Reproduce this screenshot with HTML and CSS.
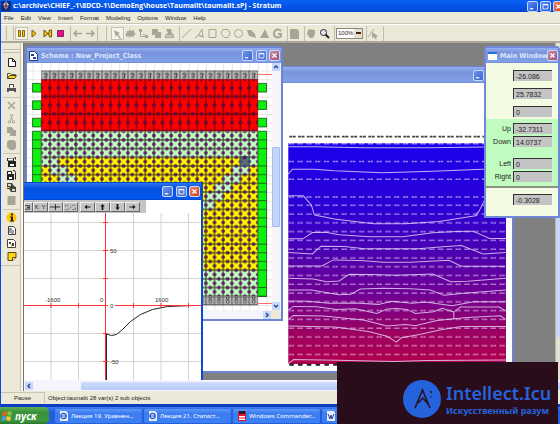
FILE: index.html
```html
<!DOCTYPE html>
<html lang="en">
<head>
<meta charset="utf-8">
<title>Stratum</title>
<link rel="stylesheet" href="styles.css">
</head>
<body>
<svg class="defs" aria-hidden="true">
  <defs>
    <symbol id="min" viewBox="0 0 11 11"><path d="M2.500 7.500h4v1.500h-4z" fill="#fff"/></symbol>
    <symbol id="max" viewBox="0 0 11 11"><path d="M2.500 3h6v5.500h-6z M2.500 3.500h6" fill="none" stroke="#fff"/></symbol>
    <symbol id="close" viewBox="0 0 11 11"><path d="M3 3l5 5M8 3l-5 5" fill="none" stroke="#fff" stroke-width="1.500"/></symbol>
    <symbol id="ie" viewBox="0 0 10 10"><path d="M1 0h6l2 2v8H1z" fill="#e8eefc"/><circle cx="4.500" cy="5" r="2.600" fill="none" stroke="#2458c0" stroke-width="1.300"/><path d="M2 5h5" stroke="#2458c0"/></symbol>
  </defs>
</svg>

<div class="app">
  <header class="titlebar">
    <svg class="app-icon" viewBox="0 0 10 10"><path d="M0 0h10v10H0z" fill="#0b2d80"/><path d="M5 0l3 4-3 5-3-5z" fill="#d9d0d0"/><path d="M1 5h8M5 1v8" stroke="#401828"/></svg>
    <h1>c:\archive\CHIEF_-1\8DCD-1\DemoEng\house\Taumalit\taumalit.sPJ - Stratum</h1>
    <button class="cap" aria-label="Minimize"><svg><use href="#min"/></svg></button>
    <button class="cap" aria-label="Maximize"><svg><use href="#max"/></svg></button>
    <button class="cap close" aria-label="Close"><svg><use href="#close"/></svg></button>
  </header>

  <nav class="menubar">
    <button>File</button><button>Edit</button><button>View</button><button>Insert</button><button>Format</button><button>Modeling</button><button>Options</button><button>Window</button><button>Help</button>
  </nav>

  <div class="toolbar">
    <span class="grip"></span>
    <button class="tool on" aria-label="Pause"><svg viewBox="0 0 13 13"><path d="M3.500 3.500h2v6h-2zM7.500 3.500h2v6h-2z" fill="#ffc400" stroke="#85640a"/></svg></button>
    <button class="tool" aria-label="Run"><svg viewBox="0 0 13 13"><path d="M4 3v7l4-3.500z" fill="#ffc400" stroke="#77590a"/></svg></button>
    <button class="tool" aria-label="Step"><svg viewBox="0 0 13 13"><path d="M3 3v7l4-3.500zM8.500 3h2v7h-2l-1-3z" fill="#ffc400" stroke="#665014"/></svg></button>
    <button class="tool" aria-label="Stop"><svg viewBox="0 0 13 13"><path d="M3.500 3.500h6v6h-6z" fill="#f0098b" stroke="#7a2858"/></svg></button>
    <span class="sep"></span>
    <button class="tool" aria-label="Back"><svg viewBox="0 0 13 13"><path d="M11 6.500H3M6 3.500l-3 3 3 3" fill="none" stroke="#a9a698" stroke-width="1.500"/></svg></button>
    <button class="tool" aria-label="Forward"><svg viewBox="0 0 13 13"><path d="M2 6.500h8M7 3.500l3 3-3 3" fill="none" stroke="#a9a698" stroke-width="1.500"/></svg></button>
    <span class="sep wide"></span>
    <button class="tool on" aria-label="Select"><svg viewBox="0 0 13 13"><path d="M3 3l6 3-2 1 3 4-1 1-3-4-1.500 1.500z" fill="#a9a698"/></svg></button>
    <button class="tool" aria-label="Parts"><svg viewBox="0 0 13 13"><path d="M3 4l2 0 1-2 1 2 3-1v2l2 2-2 1v2l-3-1-1 2-2-2-2 1V8L1 7l2-1z" fill="#a9a698"/></svg></button>
    <button class="tool" aria-label="Links"><svg viewBox="0 0 13 13"><path d="M2 2h3v3H2zM6 7h2v1H6zM8 8h3v3H8z" fill="#a9a698"/><path d="M3.500 5v4.500H8" fill="none" stroke="#a9a698"/></svg></button>
    <button class="tool" aria-label="Copy"><svg viewBox="0 0 13 13"><path d="M2 2h6v3h3v6H5V8H2z" fill="#a9a698"/></svg></button>
    <button class="tool" aria-label="Order"><svg viewBox="0 0 13 13"><path d="M3 2h5l1 4 2 2v3H2V8l3-2z" fill="#a9a698"/><path d="M3 9h7" stroke="#ece9d8"/></svg></button>
    <span class="sep"></span>
    <button class="tool" aria-label="Line"><svg viewBox="0 0 13 13"><path d="M2 11l9-9" stroke="#a9a698"/></svg></button>
    <button class="tool" aria-label="Text"><svg viewBox="0 0 13 13"><path d="M2 11l3-2 4-7 1 8-5-2 6 2" fill="none" stroke="#a9a698"/></svg></button>
    <button class="tool" aria-label="Rectangle"><svg viewBox="0 0 13 13"><path d="M3 2.500h7v8H3z" fill="none" stroke="#a9a698"/></svg></button>
    <button class="tool" aria-label="Polygon"><svg viewBox="0 0 13 13"><path d="M4 2.500h5l2 4-2 4H5l-3-4z" fill="none" stroke="#a9a698"/></svg></button>
    <button class="tool" aria-label="Ellipse"><svg viewBox="0 0 13 13"><circle cx="6.500" cy="6.500" r="4" fill="none" stroke="#a9a698"/></svg></button>
    <button class="tool" aria-label="Fill"><svg viewBox="0 0 13 13"><path d="M2 3l4 0 4 4 1 4-3-1-4-1-1-3z" fill="#a9a698"/></svg></button>
    <button class="tool" aria-label="Flip"><svg viewBox="0 0 13 13"><path d="M7 2l4 9H2z" fill="#a9a698"/></svg></button>
    <button class="tool" aria-label="Rotate"><svg viewBox="0 0 13 13"><path d="M10 4a4 4 0 1 0 0 5V7H7" fill="none" stroke="#a9a698" stroke-width="2"/></svg></button>
    <span class="sep"></span>
    <button class="tool" aria-label="Page"><svg viewBox="0 0 13 13"><path d="M2 2h7l2 2v8H2z" fill="#a9a698"/></svg></button>
    <span class="sep"></span>
    <button class="tool" aria-label="Pan"><svg viewBox="0 0 13 13"><path d="M3 3l2-1 1 1 1-1 1 1 2 0v4l-2 4H5L2 7z" fill="#a9a698"/></svg></button>
    <button class="tool" aria-label="Zoom"><svg viewBox="0 0 13 13"><path d="M7 7l4 4" stroke="#222" stroke-width="2"/><circle cx="5.500" cy="5.500" r="3" fill="#e5eaef" stroke="#222"/></svg></button>
    <span class="sep"></span>
    <span class="combo"><select aria-label="Zoom level"><option>100%</option></select></span>
    <span class="sep"></span>
    <button class="tool" aria-label="Edit nodes"><svg viewBox="0 0 13 13"><path d="M1 10l6-8" stroke="#a9a698"/><path d="M5 5l6 4-2 1 1 2-2 0-1-2-2 1z" fill="#a9a698"/></svg></button>
    <span class="sep"></span>
  </div>

  <main class="client">
    <aside class="sidebar">
      <span class="hgrip"></span>
      <button class="tool" aria-label="New"><svg viewBox="0 0 13 13"><path d="M3.500 2.500h4l3 3v5h-7zM7.500 2.500v3h3" fill="#fff" stroke="#222"/></svg></button>
      <button class="tool" aria-label="Open"><svg viewBox="0 0 13 13"><path d="M2.500 9.500v-5h3l1 1h4v2" fill="#fff59a" stroke="#555"/><path d="M2.500 9.500l2-3h7l-2 3z" fill="#f8d820" stroke="#4a4410"/></svg></button>
      <button class="tool" aria-label="Print"><svg viewBox="0 0 13 13"><path d="M4.500 5.500v-3h4v3" fill="#fff" stroke="#444"/><path d="M2 6h9v4H2z" fill="#555"/><path d="M4 9.500h5" stroke="#fff"/></svg></button>
      <span class="hsep"></span>
      <button class="tool" aria-label="Delete"><svg viewBox="0 0 13 13"><path d="M3 3l7 7M10 3l-7 7" stroke="#a9a698" stroke-width="1.500"/></svg></button>
      <button class="tool" aria-label="Cut"><svg viewBox="0 0 13 13"><path d="M5 2l3 7M8 2L5 9" stroke="#a9a698"/><circle cx="4.500" cy="10" r="1.200" fill="none" stroke="#a9a698"/><circle cx="8.500" cy="10" r="1.200" fill="none" stroke="#a9a698"/></svg></button>
      <button class="tool" aria-label="Copy"><svg viewBox="0 0 13 13"><path d="M2 2h5l2 3h2v6H5V8H2z" fill="#a9a698"/></svg></button>
      <button class="tool" aria-label="Paste"><svg viewBox="0 0 13 13"><path d="M4 2h5l2 2v6l-2 2H5L2 9V4z" fill="#a9a698"/></svg></button>
      <span class="hsep"></span>
      <button class="tool" aria-label="Save scheme"><svg viewBox="0 0 13 13"><path d="M2 3h7v3h2v6H3V6H2z" fill="#222"/><path d="M3 3.500h5v2H3zM5 9h4v2H5z" fill="#fff"/><path d="M9.500 2.500h1v2" fill="none" stroke="#222"/></svg></button>
      <button class="tool" aria-label="Save image"><svg viewBox="0 0 13 13"><path d="M2 3h5v3h2v6H2z" fill="#222"/><path d="M3 4h3v2H3zM4 9h3v2H4z" fill="#fff"/><path d="M8 2.500h1.500l1 2v7" fill="none" stroke="#222"/></svg></button>
      <button class="tool" aria-label="Import"><svg viewBox="0 0 13 13"><path d="M2 2h5l2 3 2 1v5H6L4 8H2z" fill="#444"/><path d="M3 3h3v2H3zM7 8h3v2H7z" fill="#d8d6c8"/><path d="M2 6.500h3" stroke="#d8c020"/></svg></button>
      <button class="tool" aria-label="Module"><svg viewBox="0 0 13 13"><path d="M2.500 2h8v9h-8z" fill="#a9a698"/></svg></button>
      <span class="hsep"></span>
      <button class="tool" aria-label="Information"><svg viewBox="0 0 13 13"><circle cx="6.500" cy="6.500" r="5" fill="#ffc800"/><path d="M6 2.500h2v2H6zM5 5.500h3v4h1v1H5v-1h1v-3H5z" fill="#222"/></svg></button>
      <button class="tool" aria-label="Tree"><svg viewBox="0 0 13 13"><path d="M3.500 2.500h5l2 2v6h-7z" fill="#fff" stroke="#444"/><path d="M5 5h2M6 7h3M6 9h3M5 4v5" stroke="#444"/></svg></button>
      <button class="tool" aria-label="Library"><svg viewBox="0 0 13 13"><path d="M2.500 2.500h6l2 2v6h-8z" fill="#fff" stroke="#444"/><path d="M4 5h2v2H4zM7 6h2v3H7z" fill="#444"/><path d="M6 7h1v3H6z" fill="#d8c020"/></svg></button>
      <button class="tool" aria-label="Note"><svg viewBox="0 0 13 13"><path d="M3 2.500h8v5l-3 3H3z" fill="#ffd21c" stroke="#5c4a08"/><path d="M7.500 10.500v-3h3.500" fill="#fff7c0" stroke="#5c4a08"/></svg></button>
      <span class="hsep last"></span>
    </aside>

    <div class="workspace">
      <section class="window contour" aria-label="Temperature field">
        <div class="caption"><h2></h2><button class="cap" aria-label="Minimize"><svg><use href="#min"/></svg></button><span class="spill"></span></div>
        <svg class="canvas" viewBox="203 82 308 289" preserveAspectRatio="xMinYMin slice">
          <defs>
            <linearGradient id="heat" x1="0" y1="0" x2="0" y2="1">
              <stop offset="0" stop-color="#1c00ec"/><stop offset=".3" stop-color="#2c00d4"/><stop offset=".5" stop-color="#4c00b0"/><stop offset=".7" stop-color="#740090"/><stop offset=".86" stop-color="#9c0060"/><stop offset="1" stop-color="#b2004c"/>
            </linearGradient>
            <pattern id="vals" patternUnits="userSpaceOnUse" x="288" y="199.800" width="8.750" height="8.750">
              <path d="M.5 4.200h2.300M3.300 4.200h2.400" stroke="#eeddff" stroke-width="1.500" opacity=".62"/>
            </pattern>
          </defs>
          <path d="M203 82h308v289H203z" fill="#fff"/>
          <path d="M288 142h217v220H288z" fill="url(#heat)"/>
          <path d="M289 135.500h216" stroke="#444" stroke-width="1.600" stroke-dasharray="2.800 .6 3 2.350"/>
          <path d="M289 362.800h50" stroke="#222" stroke-width="2" stroke-dasharray="4.500 4.250"/>
          <path d="M288.500 142.500H505M288.500 160.300H505M288.500 178H505M288.500 195.600H505" stroke="#eeddff" stroke-width="1.500" stroke-dasharray="2.300 .5 2.400 3.550" opacity=".62"/>
          <path d="M288 199.800h217v157.500H288z" fill="url(#vals)"/>
          <g fill="none" stroke="#ddd0f4" stroke-width="1" opacity=".85">
            <path d="M288 145.500h28l47 1h65l77-1M288 173l4-5h22l20 1.500 48 2 50-1.500 50-2h19l4 4M288 194.500h15l8 9 3 10M486 194l-3 6-5 10-3 3"/>
            <g transform="translate(280 200) scale(.3333)" stroke-width="3">
              <path d="M102 41l60 12 117 14 96 0 100-7 114-18"/>
              <path d="M24 112h44l28-19 40-1 40 8 90 6h100l90-12 70-4 50-1 50 22h50"/>
              <path d="M24 153l72 4 26-23 70 1 60 7h160l75-6 55-4 65 25 68-4"/>
              <path d="M24 193h100l35-18 80 2 70 5h80l115-6 38 18h130"/>
              <path d="M24 230l75 2 40 8 37-2 30-20 70 1 70 2 110-4 54 23 50-1 115-9"/>
              <path d="M24 265h70l80 14 37-1 28-16 70-2 80 1 60 4 40 16 60-6 126-10"/>
              <path d="M24 298l60 1 60 6 80-1 70 4 40-9 60 6 40-4 80 11 65-12h96"/>
              <path d="M24 325l15-11 70 1 60 8 55-2 65 14 30-13 30-2 30 3 25 12 55-5 25-10 35 11 20-15h116l20 12"/>
              <path d="M24 353l15-12 90 2 120 12 70 18 55-5 30 4 65-16 90-9 100-5 15 11M519 330v24"/>
              <path d="M24 373l140 3 100 13 55 14 28 18 15-13 54-10 65-14 60-10h134"/>
              <path d="M24 485l16-12 130 2 170 4 100-3 235-2"/>
            </g>
          </g>
        </svg>
      </section>

      <section class="window scheme" aria-label="Scheme : New_Project_Class">
        <div class="caption">
          <svg class="doc-icon" viewBox="0 0 9 10"><path d="M.5.500h5l3 3v6h-8z" fill="#fff" stroke="#223c90"/><path d="M2 3h3v2H2zM4 6h3v2H4z" fill="#223c90"/></svg>
          <h2>Scheme : New_Project_Class</h2>
          <button class="cap" aria-label="Minimize"><svg><use href="#min"/></svg></button>
          <button class="cap" aria-label="Maximize"><svg><use href="#max"/></svg></button>
          <button class="cap close" aria-label="Close"><svg><use href="#close"/></svg></button>
        </div>
        <div class="pane">
          <svg class="canvas" viewBox="26 62 246 249" preserveAspectRatio="xMinYMin slice">
            <defs>
              <pattern id="paper" patternUnits="userSpaceOnUse" x="31.600" y="60.800" width="8.700" height="8.720"><path d="M0 .500h8.700M.5 0v8.720" stroke="#e6e6e6" fill="none"/></pattern>
              <pattern id="mesh" patternUnits="userSpaceOnUse" x="40.300" y="130.500" width="8.700" height="8.720">
                <path d="M0 0h8.700M0 0v8.720M8.700 0v8.720M0 8.720h8.700" fill="none" stroke="#182010" stroke-width=".9"/>
                <g fill="#86108a" stroke="#280828" stroke-width=".7"><circle cx="0" cy="4.360" r="1.500"/><circle cx="8.700" cy="4.360" r="1.500"/><circle cx="4.350" cy="0" r="1.500"/><circle cx="4.350" cy="8.720" r="1.500"/></g>
              </pattern>
              <pattern id="brick" patternUnits="userSpaceOnUse" x="40.300" y="78.200" width="8.700" height="17.440">
                <path d="M0 0h8.700M0 0v17.440M8.700 0v17.440M0 17.440h8.700" fill="none" stroke="#500000" stroke-width=".9"/>
                <g fill="#70106c" stroke="#280818" stroke-width=".7"><circle cx="0" cy="8.720" r="1.500"/><circle cx="8.700" cy="8.720" r="1.500"/><circle cx="4.350" cy="0" r="1.500"/><circle cx="4.350" cy="17.440" r="1.500"/></g>
              </pattern>
              <pattern id="port" patternUnits="userSpaceOnUse" x="40.300" y="69.500" width="8.700" height="8.700">
                <path d="M0 .300h8.700M0 0v8.700M8.700 0v8.700" stroke="#333" stroke-width=".8"/>
                <path d="M3.200 4.500V3h2.600v2L4.400 6" fill="none" stroke="#222" stroke-width=".9"/><circle cx="4.500" cy="7" r="1.100" fill="#ccc" stroke="#222" stroke-width=".8"/>
              </pattern>
              <pattern id="foot" patternUnits="userSpaceOnUse" x="40.300" y="296.200" width="8.700" height="9">
                <path d="M0 .400h8.700M0 0v9M8.700 0v9M0 8.700h8.700" stroke="#333" stroke-width=".8"/>
                <circle cx="4.500" cy="2" r="1.300" fill="#ccc" stroke="#222" stroke-width=".8"/><circle cx="4.500" cy="5.400" r="1.500" fill="#ddd" stroke="#222" stroke-width=".9"/>
              </pattern>
            </defs>
            <path d="M26 62h246v249H26z" fill="#fff"/><path d="M26 62h246v249H26z" fill="url(#paper)"/>
            <path d="M257 73.500h15M257 303.500h15" stroke="#f66"/>
            <g fill="#0df010" stroke="#145014" stroke-width=".8">
              <path d="M31.600 82.500h8.700v8.700h-8.700zM31.600 100h8.700v8.700h-8.700zM31.600 117.500h8.700v8.700h-8.700zM31.600 130.500h8.700v166h-8.700zM257.800 82.500h8.700v8.700h-8.700zM257.800 100h8.700v8.700h-8.700zM257.800 117.500h8.700v8.700h-8.700zM257.800 130.500h8.700v166h-8.700z"/>
              <path d="M31.600 139.200h8.700m-8.700 8.700h8.700m-8.700 17.500h8.700m-8.700 8.700h8.700M257.800 139.200h8.700m-8.700 8.700h8.700m-8.700 17.500h8.700m-8.700 8.700h8.700m-8.700 8.700h8.700m-8.700 8.700h8.700m-8.700 8.700h8.700m-8.700 8.700h8.700m-8.700 8.700h8.700m-8.700 8.700h8.700m-8.700 17.500h8.700m-8.700 8.700h8.700m-8.700 8.700h8.700m-8.700 8.700h8.700m-8.700 17.500h8.700m-8.700 8.700h8.700"/>
            </g>
            <path d="M40.300 69.500h217.500v8.700H40.300zM40.300 296.200h217.500v9H40.300z" fill="#b8b8b8"/>
            <path d="M40.300 69.500h217.500v8.700H40.300z" fill="url(#port)"/>
            <path d="M40.300 296.200h217.500v9H40.300z" fill="url(#foot)"/>
            <path d="M40.300 78.200h217.500v52.300H40.300z" fill="#fb0000"/>
            <path d="M40.300 78.200h217.500v52.300H40.300z" fill="url(#brick)"/>
            <path d="M40.300 130.500h217.500v165.700H40.300z" fill="#c2fac2"/>
            <path d="M40.300 156.700h217.500v113.400H40.300z" fill="#fff400"/>
            <path d="M40.300 156.700h17.400v8.700h8.700v8.700h8.700v8.700h8.700v8.700H66.400v-8.700h-8.700v-8.700H49v-8.700h-8.700z" fill="#c2fac2"/>
            <path d="M257.800 156.700v8.700h-8.700v8.700h-8.700v8.700h-8.700v8.700H223v8.700h-8.700v8.700h-17.400v-8.700h8.700v-8.700h8.700v-8.700h8.700v-8.700h8.700v-8.700h17.400v-8.700z" fill="#c2fac2"/>
            <path d="M40.300 130.500h217.500v165.700H40.300z" fill="url(#mesh)"/>
            <path d="M239.500 155.500h10v10.500h-10z" fill="#3a5288" opacity=".82"/><circle cx="244.500" cy="157" r="1.500" fill="#601870" stroke="#222" stroke-width=".7"/>
          </svg>
          <div class="vscroll">
            <svg viewBox="0 0 8 8"><path d="M2 5l2-2 2 2" fill="none" stroke="#2c4a88" stroke-width="1.500"/></svg>
            <span class="track a"></span><span class="thumb"></span><span class="track b"></span>
            <svg viewBox="0 0 8 8"><path d="M2 3l2 2 2-2" fill="none" stroke="#2c4a88" stroke-width="1.500"/></svg>
          </div>
        </div>
        <div class="hscroll mini"><span class="track"></span><svg viewBox="0 0 8 8"><path d="M3 2l2 2-2 2" fill="none" stroke="#2c4a88" stroke-width="1.500"/></svg><span class="corner"></span></div>
      </section>

      <section class="window graph active" aria-label="Graph">
        <div class="caption">
          <h2></h2>
          <button class="cap" aria-label="Minimize"><svg><use href="#min"/></svg></button>
          <button class="cap" aria-label="Maximize"><svg><use href="#max"/></svg></button>
          <button class="cap close" aria-label="Close"><svg><use href="#close"/></svg></button>
        </div>
        <div class="plot-tools">
          <button class="cut" aria-label="Scale"><svg viewBox="0 0 15 9"><path d="M7 3h5v4H7M9 5h3" fill="none" stroke="#222"/></svg></button>
          <button class="xy">X: Y:</button>
          <button aria-label="Axes"><svg viewBox="0 0 15 9"><path d="M1 4.500h12M7.500 1v7" stroke="#222"/></svg></button>
          <button aria-label="Fit"><svg viewBox="0 0 15 9"><path d="M2 7.500h3l5-5h3M10 7.500h3V5M2 4V2.500h3" fill="none" stroke="#555" stroke-dasharray="2 1"/></svg></button>
          <i></i>
          <button aria-label="Left"><svg viewBox="0 0 15 9"><path d="M4 4.500l3-2.500v2h4v1H7v2z" fill="#111"/></svg></button>
          <button aria-label="Up"><svg viewBox="0 0 15 9"><path d="M7.500 1l2.500 3H8.500v4h-2V4H5z" fill="#111"/></svg></button>
          <button aria-label="Down"><svg viewBox="0 0 15 9"><path d="M7.500 8l2.500-3H8.500V1h-2v4H5z" fill="#111"/></svg></button>
          <button aria-label="Right"><svg viewBox="0 0 15 9"><path d="M11 4.500L8 2v2H4v1h4v2z" fill="#111"/></svg></button>
        </div>
        <svg class="canvas" viewBox="24 212 177 168" preserveAspectRatio="xMinYMin slice">
          <path d="M24 212h177v168H24z" fill="#fff"/>
          <path d="M51 212v168M78.500 212v168M133.500 212v168M161 212v168M188.500 212v168M24 221.500h177M24 249.500h177M24 277.500h177M24 332.500h177M24 360.500h177" stroke="#d4d4d4"/>
          <path d="M106.500 380v-47l5 1.500 5-1 6-5 8-8 10-7 12-5 15-3 25-1" fill="none" stroke="#222"/>
          <path d="M24 304.500h84M115 304.500h86M105.500 212v168M103 221.500h5M103 249.500h5M103 277.500h5M103 332.500h5M103 360.500h5M51 302v5M78.500 302v5M133.500 302v5M161 302v5M188.500 302v5" stroke="#f33"/>
          <g class="ticks"><text x="110" y="252">50</text><text x="110" y="307">0</text><text x="110" y="363">-50</text><text x="100" y="301">0</text><text x="45" y="301">-1600</text><text x="155" y="301">1600</text></g>
        </svg>
      </section>

      <section class="window values" aria-label="Main Window">
        <div class="caption">
          <svg class="doc-icon" viewBox="0 0 9 8"><path d="M0 0h9v8H0z" fill="#fff"/><path d="M0 0h9v2H0z" fill="#2470d8"/></svg>
          <h2>Main Window</h2>
          <button class="cap close" aria-label="Close"><svg><use href="#close"/></svg></button>
        </div>
        <form class="fields">
          <div class="group top">
            <input aria-label="Value 1" value="-26.086"><input aria-label="Value 2" value="25.7832"><input aria-label="Value 3" value="0">
          </div>
          <div class="group mint">
            <div class="row"><label for="up">Up</label><input id="up" value="-32.7311"></div>
            <div class="row"><label for="down">Down</label><input id="down" value="14.0737"></div>
            <div class="row gap"><label for="left">Left</label><input id="left" value="0"></div>
            <div class="row"><label for="right">Right</label><input id="right" value="0"></div>
          </div>
          <div class="group end"><input aria-label="Value 4" value="-0.3028"></div>
        </form>
      </section>
    </div>

    <div class="app-vscroll"><span></span></div>
    <div class="hscroll main">
      <svg viewBox="0 0 8 8"><path d="M5 2L3 4l2 2" fill="none" stroke="#2c4a88" stroke-width="1.500"/></svg>
      <span class="track"></span><span class="thumb"></span>
    </div>
  </main>

  <footer class="status"><span class="state">Pause</span><span>Object:taumalit 28 var(s) 2 sub objects</span></footer>
</div>

<div class="taskbar">
  <button class="start"><svg viewBox="0 0 11 11"><path d="M1 2l4-1v4L0 6z" fill="#f05a28"/><path d="M6 1l4 1-1 4-4-1z" fill="#7cc83c"/><path d="M0 7l4-1v4l-4 1z" fill="#4a9cf8"/><path d="M5 6l4 1-1 4-4-1z" fill="#fbc822"/></svg>пуск</button>
  <button class="task"><svg><use href="#ie"/></svg>Лекция 19. Уравнен...</button>
  <button class="task"><svg><use href="#ie"/></svg>Лекция 21. Статист...</button>
  <button class="task"><svg viewBox="0 0 10 10"><path d="M1 0h8v10H1z" fill="#d8182c"/><path d="M2 0h6v3H2z" fill="#202030"/><path d="M2 5h6v4H2z" fill="#fff"/><path d="M2 7h6" stroke="#d8182c"/></svg>Windows Commander...</button>
  <button class="task" aria-label="Document"><svg viewBox="0 0 10 10"><path d="M1 0h7l1 2v8H1z" fill="#e8eefc"/><path d="M2 3l2 5 1-4 1 4 2-5" fill="none" stroke="#2040a0"/></svg></button>
</div>

<div class="brand">
  <svg viewBox="0 0 38 40"><circle cx="19" cy="20" r="19" fill="#2563dc"/><path d="M12 29l7.500-18L27 29M15 24l5-5 5 6" fill="none" stroke="#2a0d1b" stroke-width="1.500"/><circle cx="28" cy="13" r="1" fill="#2a0d1b"/><circle cx="28" cy="18" r=".7" fill="#2a0d1b"/></svg>
  <div><strong>Intellect.Icu</strong><span>Искусственный разум</span></div>
</div>
</body>
</html>
```

FILE: styles.css
```css
* { box-sizing: border-box; }

body {
  margin: 0;
  height: 100vh;
  display: flex;
  flex-direction: column;
  overflow: hidden;
  position: relative;
  font-family: "Liberation Sans", sans-serif;
  font-size: 7px;
  color: #222;
  background: #245edb;
}

.defs { position: absolute; width: 0; height: 0; }

button, input, select {
  font: inherit;
  color: inherit;
  margin: 0;
  padding: 0;
  border: 0;
  border-radius: 0;
  background: none;
}

svg { display: block; flex: none; }

h1, h2 { margin: 0; flex: 1; min-width: 0; white-space: nowrap; }

.app {
  flex: 1;
  min-height: 0;
  display: flex;
  flex-direction: column;
  border-left: 1px solid #0a4ae0;
  border-bottom: 3px solid #0c3cc0;
  background: #ece9d8;
}

/* Captions */
.titlebar {
  height: 12px;
  flex: none;
  display: flex;
  align-items: center;
  gap: 2px;
  padding-left: 1px;
  margin-left: -1px;
  overflow: hidden;
  color: #fff;
  background: linear-gradient(#0862f4, #0452e4 60%, #0348d0);
}

.titlebar h1 { font: bold 7px/12px "Open Sans", sans-serif; }
.app-icon { width: 10px; height: 10px; }
.titlebar .close { margin-right: -4px; }

.cap {
  width: 11px;
  height: 11px;
  flex: none;
  border: 1px solid #c8d8fc;
  border-radius: 2px;
  background: linear-gradient(135deg, #5c8cf4, #1c50d8);
}

.cap svg { width: 9px; height: 9px; }
.cap.close { background: linear-gradient(135deg, #f08868, #d03c18); }

.menubar {
  height: 12px;
  flex: none;
  display: flex;
  align-items: center;
  gap: 7px;
  padding-left: 3px;
  font-size: 6px;
  border-bottom: 1px solid #c8c5b4;
}

/* Tool strips */
.toolbar {
  height: 19px;
  flex: none;
  display: flex;
  align-items: center;
  padding-left: 5px;
  border-top: 1px solid #fff;
  border-bottom: 2px solid #aca899;
}

.grip { width: 8px; height: 14px; border-left: 1px solid #c0bdac; border-right: 1px solid #c0bdac; margin-right: 1px; }
.tool { width: 13px; height: 13px; flex: none; }
.tool svg { width: 13px; height: 13px; }
.tool.on { outline: 1px solid #c4c1b2; outline-offset: -1px; background: #f5f3ea; }
.sep { width: 4px; height: 15px; flex: none; border-right: 1px solid #c0bdac; }
.sep.wide { width: 10px; margin-right: 4px; border-left: 1px solid #c0bdac; }

.combo { position: relative; flex: none; width: 27px; height: 11px; margin-left: 1px; }
.combo select {
  width: 100%;
  height: 100%;
  display: block;
  appearance: none;
  padding-left: 1px;
  font-size: 6px;
  background: #fff;
  border: 1px solid #8c8a80;
}
.combo::after {
  content: "";
  position: absolute;
  right: 1px;
  top: 1px;
  width: 8px;
  height: 9px;
  background: linear-gradient(#4c2010, #4c2010) center / 5px 2px no-repeat #e4e0d0;
  pointer-events: none;
}

.client {
  flex: 1;
  min-height: 0;
  display: grid;
  grid-template-columns: 23px 1fr 5px;
  grid-template-rows: 1fr 11px;
}

.sidebar {
  grid-row: 1 / 3;
  display: flex;
  flex-direction: column;
  align-items: center;
  padding-right: 2px;
  border-right: 1px solid #77756a;
  box-shadow: inset -2px 0 #f8f6ee, inset -3px 0 #c8c5b4;
}

.hgrip { width: 17px; height: 4px; flex: none; margin: 6px 0 3px; border-top: 1px solid #c0bdac; border-bottom: 1px solid #c0bdac; }
.hsep { width: 17px; height: 3px; flex: none; border-bottom: 1px solid #c8c5b4; margin-bottom: 1px; }
.hsep.last { width: 100%; }

.workspace { position: relative; background: #808080; }

.app-vscroll { background: #e4e0d4; padding-top: 9px; padding-bottom: 43px; border-left: 1px solid #b8b6aa; }
.app-vscroll span { display: block; height: 100%; background: #c8d6fb; }

/* Document windows placed on the workspace */
.window {
  position: absolute;
  display: flex;
  flex-direction: column;
  border: 2px solid #6c84d4;
  border-radius: 4px 4px 0 0;
  background: #fff;
}

.caption {
  height: 15px;
  flex: none;
  display: flex;
  align-items: center;
  gap: 3px;
  padding: 0 1px 0 2px;
  color: #dce6fc;
  background: linear-gradient(#94b0f0, #7a94dc 30%, #80a0e8 90%, #7088d0);
}

.caption h2 { font: bold 7px/14px "DejaVu Sans Condensed", "DejaVu Sans", sans-serif; }
.caption .cap { background: linear-gradient(135deg, #6c94ec, #3c64cc); }
.caption .close { margin-left: -1px; background: linear-gradient(135deg, #c890a8, #a05068); }
.doc-icon { width: 9px; height: 10px; }

.active { border-color: #0c48d0; }
.active .caption { background: linear-gradient(#2c74f4, #0450e0 30%, #0458f0 90%, #0344c4); }
.active .close { background: linear-gradient(135deg, #f08868, #d03c18); }

.canvas { width: 100%; flex: 1; min-height: 0; }

.contour { left: 177px; top: 23px; width: 313px; height: 307px; }
.contour .spill { width: 24px; }
.contour .caption { margin-top: -1px; height: 16px; }

.scheme { left: 1px; top: 3px; width: 258px; height: 275px; }
.pane { flex: 1; min-height: 0; display: flex; }
.pane .canvas { width: auto; height: 100%; }

.vscroll { width: 9px; flex: none; display: flex; flex-direction: column; background: #f4f4fa; }
.vscroll svg { width: 8px; height: 8px; background: #c8d8fc; }
.vscroll .a { flex: 77; }
.vscroll .b { flex: 76; }
.vscroll .thumb { flex: 79; margin-right: 1px; background: #c4d4fb; border: 1px solid #a8bcf0; border-radius: 1px; }

.hscroll { display: flex; align-items: center; background: #f4f4fa; }
.hscroll svg { width: 8px; height: 8px; background: #c8d8fc; }
.hscroll.mini { height: 9px; flex: none; }
.hscroll.mini .track { flex: 1; }
.hscroll .corner { width: 10px; height: 100%; background: #ece9d8; }
.hscroll.main { grid-column: 2 / 4; }
.hscroll.main svg { margin-left: 1px; }
.hscroll.main .track { width: 48px; }
.hscroll.main .thumb { flex: 1; height: 8px; background: linear-gradient(#d0defd, #b8ccf8); border-radius: 1px; }

.graph { left: 0; top: 139px; bottom: 0; width: 179px; border-left: 0; border-bottom: 0; border-radius: 0 4px 0 0; }
.graph .caption { margin-top: -1px; height: 17px; }

.plot-tools { flex: none; height: 13px; width: 122px; display: flex; align-items: center; background: #c4c4c4; }
.plot-tools button { width: 15px; height: 10px; flex: none; border: 1px solid #666; border-left-color: #eee; border-top-color: #eee; display: flex; align-items: center; justify-content: center; }
.plot-tools svg { width: 13px; height: 8px; }
.plot-tools .cut { width: 9px; overflow: hidden; justify-content: flex-end; }
.plot-tools .xy { font-size: 6px; white-space: nowrap; }
.plot-tools i { width: 2px; }

.ticks { font-size: 6px; fill: #333; }

.values { right: -5px; top: 3px; width: 76px; border-color: #7088d8; z-index: 2; background: #f3fce2; }
.values .caption { padding-right: 0; }
.values .doc-icon { height: 8px; }

.fields { margin: 0; font-size: 7px; }
.group { display: flex; flex-direction: column; align-items: flex-end; padding-right: 6px; }
.top { gap: 7px; padding-top: 7px; padding-bottom: 2px; }
.mint { background: #c0fcc0; gap: 2px; padding-top: 4px; padding-bottom: 4px; }
.end { padding-top: 6px; padding-bottom: 11px; border-top: 2px solid #8c9484; }
.row { display: flex; align-items: center; gap: 2px; }
.row.gap { margin-top: 9px; }

.fields input {
  width: 39px;
  height: 11px;
  padding-left: 2px;
  background: #c4c4c4;
  border-left: 1px solid #333;
  border-top: 1px solid #333;
}

.status { height: 13px; flex: none; display: flex; align-items: center; font-size: 6px; }
.state { width: 44px; height: 11px; line-height: 11px; text-align: center; margin-right: 3px; border-right: 1px solid #c8c5b4; border-top: 1px solid #c8c5b4; }

/* Taskbar */
.taskbar {
  height: 17px;
  flex: none;
  display: flex;
  align-items: center;
  gap: 2px;
  color: #fff;
  background: linear-gradient(#3c80f0, #245cd8 25%, #2460dc);
}

.start {
  width: 49px;
  height: 17px;
  flex: none;
  display: flex;
  align-items: center;
  gap: 2px;
  padding-left: 2px;
  margin-right: 4px;
  font: italic bold 10px/16px "Open Sans", sans-serif;
  border-radius: 0 5px 5px 0;
  background: linear-gradient(#60b058, #389038 30%, #3c983c 80%, #2c742c);
}

.start svg { width: 11px; height: 11px; }

.task {
  width: 87px;
  height: 14px;
  flex: none;
  display: flex;
  align-items: center;
  gap: 2px;
  padding-left: 4px;
  overflow: hidden;
  white-space: nowrap;
  border-radius: 2px;
  font: 6px/14px "Noto Sans", sans-serif;
  background: linear-gradient(#5c98fc, #3c7cf0 30%, #3c80f4);
}

.task svg { width: 10px; height: 10px; }

/* Brand plate lying over the lower right corner */
.brand {
  position: absolute;
  right: 2px;
  bottom: 0;
  width: 221px;
  height: 62px;
  display: flex;
  align-items: center;
  gap: 5px;
  padding: 12px 0 0 66px;
  background: #2a0d1b;
  color: #2563dc;
  z-index: 3;
}

.brand svg { width: 38px; height: 40px; }
.brand div { display: flex; flex-direction: column; white-space: nowrap; }
.brand strong { font: 600 18px/24px "Noto Sans", sans-serif; }
.brand span { font: bold 9px/12px "Noto Sans", sans-serif; }
```
